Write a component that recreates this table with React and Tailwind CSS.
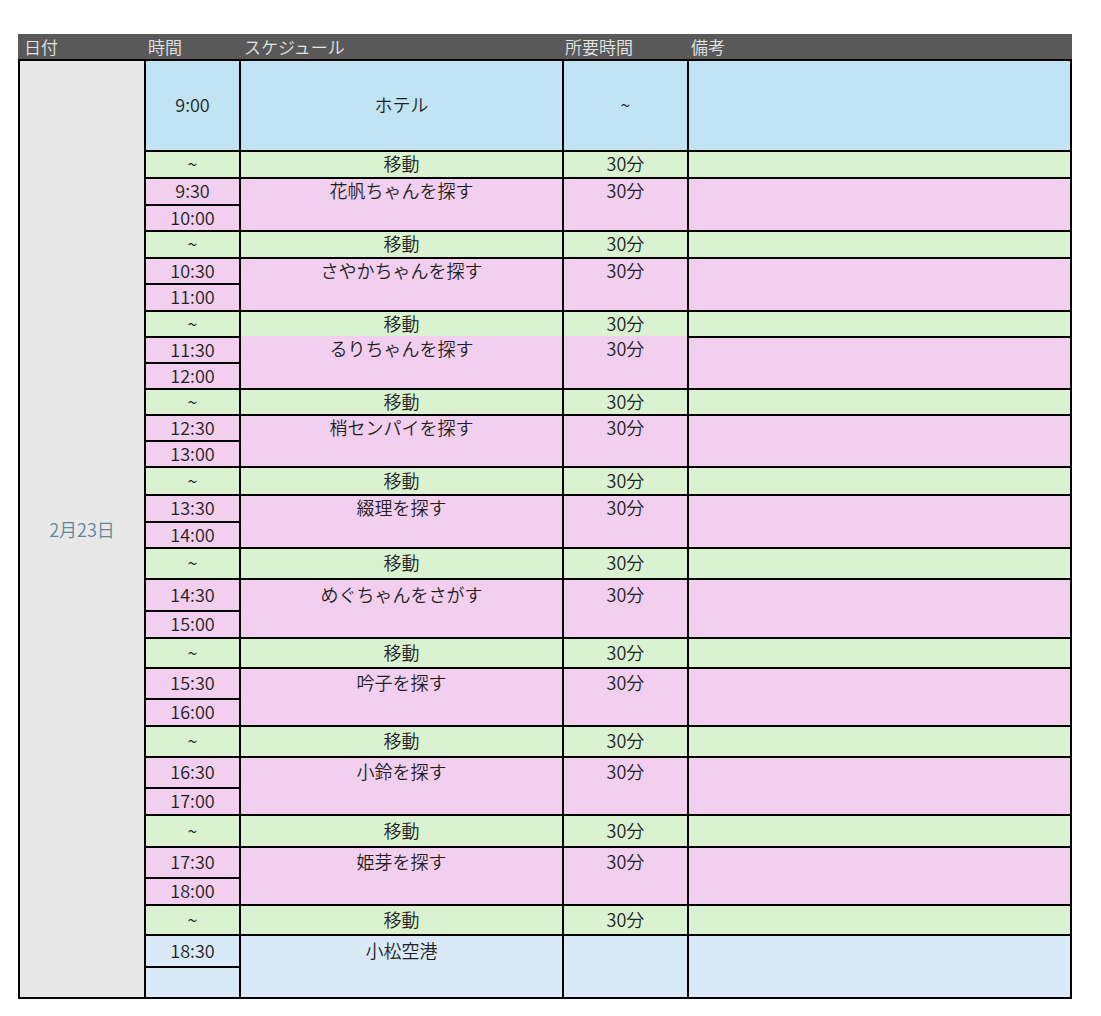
import React from 'react';
import clsx from 'clsx';

const BLUE = 'bg-[#c1e4f5]';
const GREEN = 'bg-[#daf2d0]';
const PINK = 'bg-[#f2ceef]';
const PALE = 'bg-[#dae9f8]';

// row heights are measured from the sheet, top border included
const blocks = [
  { type: 'hotel', h: 'h-[91px]' },
  { type: 'move', h: 'h-[27px]' },
  { type: 'visit', times: ['9:30', '10:00'], rows: ['h-[27px]', 'h-[26px]'], first: 'h-[25px]', name: '花帆ちゃんを探す' },
  { type: 'move', h: 'h-[27px]' },
  { type: 'visit', times: ['10:30', '11:00'], rows: ['h-[26px]', 'h-[27px]'], first: 'h-[24px]', name: 'さやかちゃんを探す' },
  { type: 'move', h: 'h-[26px]' },
  { type: 'visit', times: ['11:30', '12:00'], rows: ['h-[26px]', 'h-[26px]'], first: 'h-[26px]', name: 'るりちゃんを探す', open: true },
  { type: 'move', h: 'h-[26px]' },
  { type: 'visit', times: ['12:30', '13:00'], rows: ['h-[26px]', 'h-[26px]'], first: 'h-[24px]', name: '梢センパイを探す' },
  { type: 'move', h: 'h-[28px]' },
  { type: 'visit', times: ['13:30', '14:00'], rows: ['h-[27px]', 'h-[26px]'], first: 'h-[25px]', name: '綴理を探す' },
  { type: 'move', h: 'h-[31px]' },
  { type: 'visit', times: ['14:30', '15:00'], rows: ['h-[32px]', 'h-[27px]'], first: 'h-[30px]', name: 'めぐちゃんをさがす' },
  { type: 'move', h: 'h-[30px]' },
  { type: 'visit', times: ['15:30', '16:00'], rows: ['h-[31px]', 'h-[27px]'], first: 'h-[29px]', name: '吟子を探す' },
  { type: 'move', h: 'h-[31px]' },
  { type: 'visit', times: ['16:30', '17:00'], rows: ['h-[31px]', 'h-[27px]'], first: 'h-[29px]', name: '小鈴を探す' },
  { type: 'move', h: 'h-[32px]' },
  { type: 'visit', times: ['17:30', '18:00'], rows: ['h-[31px]', 'h-[27px]'], first: 'h-[29px]', name: '姫芽を探す' },
  { type: 'move', h: 'h-[30px]' },
  { type: 'end', times: ['18:30', ''], rows: ['h-[32px]', 'h-[31px]'], first: 'h-[30px]', name: '小松空港' },
];

function Cell({ className, open, children }) {
  return (
    <div
      className={clsx(
        'border-l-2 border-black flex flex-col',
        !open && 'border-t-2',
        className
      )}
    >
      {children}
    </div>
  );
}

function Text({ className, children }) {
  return (
    <div className={clsx('flex items-center justify-center pb-[3px] leading-none', className)}>
      {children}
    </div>
  );
}

function Block({ b }) {
  if (b.type === 'hotel') {
    return (
      <div className={clsx('flex', b.h, BLUE)}>
        <Cell className="w-[95px]"><Text className="flex-1">9:00</Text></Cell>
        <Cell className="w-[323px]"><Text className="flex-1">ホテル</Text></Cell>
        <Cell className="w-[125px]"><Text className="flex-1">~</Text></Cell>
        <Cell className="w-[383px]" />
      </div>
    );
  }

  if (b.type === 'move') {
    return (
      <div className={clsx('flex', b.h, GREEN)}>
        <Cell className="w-[95px]"><Text className="flex-1">~</Text></Cell>
        <Cell className="w-[323px]"><Text className="flex-1">移動</Text></Cell>
        <Cell className="w-[125px]"><Text className="flex-1">30分</Text></Cell>
        <Cell className="w-[383px]" />
      </div>
    );
  }

  const bg = b.type === 'end' ? PALE : PINK;
  const dur = b.type === 'end' ? '' : '30分';

  return (
    <div className={clsx('flex', bg)}>
      <div className="w-[95px] flex flex-col">
        {b.times.map((t, i) => (
          <Cell key={i} className={b.rows[i]}>
            <Text className="flex-1">{t}</Text>
          </Cell>
        ))}
      </div>
      <Cell className="w-[323px]" open={b.open}>
        <Text className={b.first}>{b.name}</Text>
      </Cell>
      <Cell className="w-[125px]" open={b.open}>
        <Text className={b.first}>{dur}</Text>
      </Cell>
      <Cell className="w-[383px]" />
    </div>
  );
}

export default function App() {
  return (
    <div className="min-h-screen bg-white pt-[34px] pl-[18px] font-['Noto_Sans_CJK_JP',sans-serif] font-[350] text-[#1f1f1f]">
      <div className="w-[1054px]">
        <div className="flex h-[25px] bg-[#595959] text-[17px] text-[#e4e4e4] leading-none">
          <div className="w-[126px] flex items-center pl-[6px]">日付</div>
          <div className="w-[95px] flex items-center pl-[4px]">時間</div>
          <div className="w-[323px] flex items-center pl-[5px]">スケジュール</div>
          <div className="w-[125px] flex items-center pl-[3px]">所要時間</div>
          <div className="w-[385px] flex items-center pl-[4px]">備考</div>
        </div>

        <div className="flex border-r-2 border-b-2 border-black text-[18px]">
          <div className="w-[126px] border-l-2 border-t-2 border-black bg-[#e8e8e8] flex items-center justify-center text-[#5f879b]">
            2月23日
          </div>
          <div className="flex flex-col">
            {blocks.map((b, i) => (
              <Block key={i} b={b} />
            ))}
          </div>
        </div>
      </div>
    </div>
  );
}
